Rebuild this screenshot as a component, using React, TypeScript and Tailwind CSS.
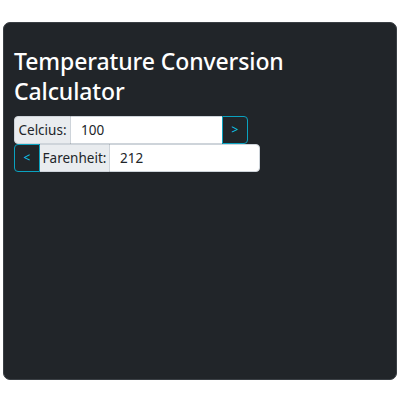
export default function App() {
  return (
    <div className="w-[400px] h-[400px] bg-white pt-[22px] px-[3px]" style={{ fontFamily: '"Noto Sans", "Open Sans", sans-serif' }}>
      <div className="h-[358px] bg-[#212529] rounded-[7px] border border-[#3a3f44] px-[10px] pt-[23px]">
        <h1 className="text-white text-[23px] leading-[30px] font-medium mb-[10px] tracking-[-0.1px]">
          Temperature Conversion Calculator
        </h1>
        <div className="flex flex-col">
          <div className="flex h-[28px] w-[234px] text-[13.5px]">
            <span className="flex items-center justify-center w-[57px] bg-[#e9ecef] text-[#212529] rounded-l-[4px] border border-[#ced4da] whitespace-nowrap">Celcius:</span>
            <div className="flex items-center flex-1 bg-white text-[#212529] pl-[10px] border-y border-[#ced4da]">100</div>
            <button className="w-[26px] flex items-center justify-center text-[#0dcaf0] border border-[#0aa2c0] rounded-r-[4px] text-[12px]">&gt;</button>
          </div>
          <div className="flex h-[28px] w-[246px] text-[13.5px]">
            <button className="w-[26px] flex items-center justify-center text-[#0dcaf0] border border-[#0aa2c0] rounded-l-[4px] text-[12px]">&lt;</button>
            <span className="flex items-center justify-center w-[69px] bg-[#e9ecef] text-[#212529] border-y border-[#ced4da] whitespace-nowrap">Farenheit:</span>
            <div className="flex items-center flex-1 bg-white text-[#212529] pl-[10px] rounded-r-[4px] border border-[#ced4da]">212</div>
          </div>
        </div>
      </div>
    </div>
  );
}
